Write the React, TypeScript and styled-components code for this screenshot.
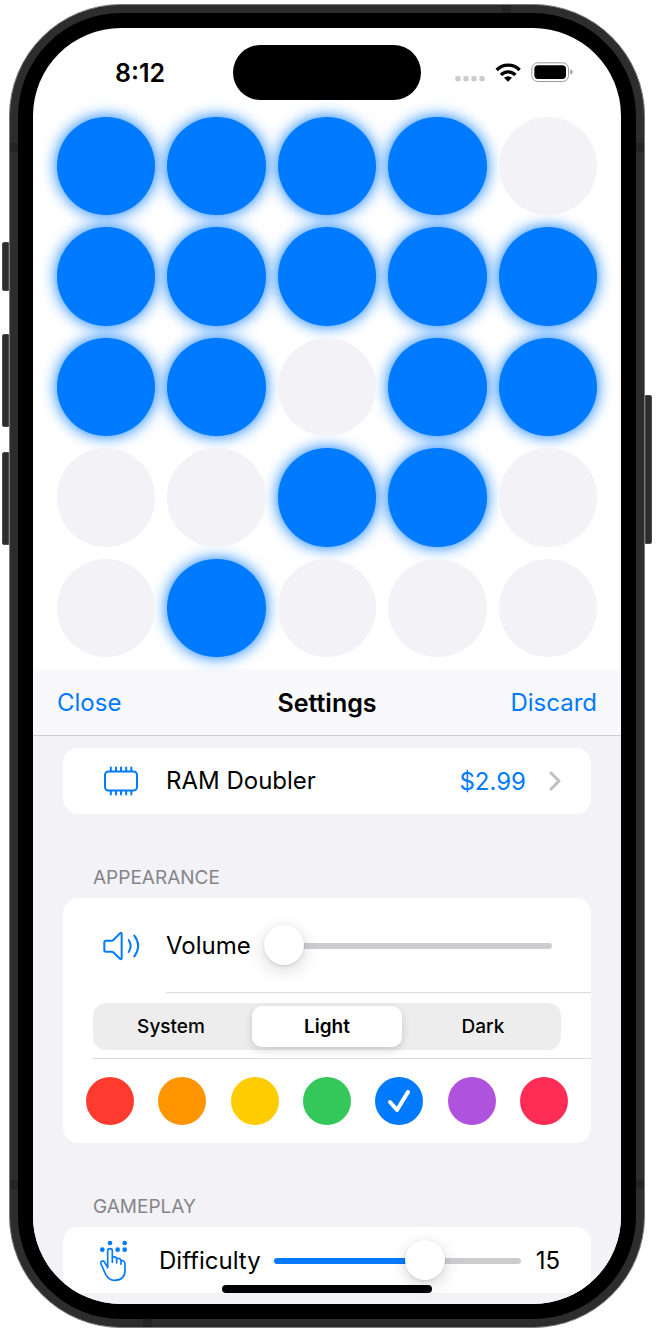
import React, { useState } from "react";
import styled, { createGlobalStyle } from "styled-components";

const colors = {
  blue: "#007aff",
  fill: "#f2f2f7",
  bar: "#f9f9fc",
  line: "#dcdcdf",
  track: "#cdcdcf",
  secondary: "#858589",
};

const GlobalStyle = createGlobalStyle`
  *, *::before, *::after { box-sizing: border-box; }
  body {
    margin: 0;
    background: #fff;
    color: #000;
    font-family: Inter, "Liberation Sans", sans-serif;
    font-size: 24px;
    line-height: 32px;
  }
  button, input { font: inherit; margin: 0; }
`;

const Page = styled.div`
  display: grid;
  grid-template-columns: 7px minmax(0, 1fr) 7px;
  padding: 4px 4px 4px 2px;
`;

const KeyRail = styled.div<{ $offset: number }>`
  display: flex;
  flex-direction: column;
  padding-top: ${(p) => p.$offset}px;
`;

const HardwareKey = styled.div<{ $length: number; $gap?: number; $side: "left" | "right" }>`
  height: ${(p) => p.$length}px;
  margin-bottom: ${(p) => p.$gap ?? 0}px;
  background: #2d2d2d;
  border: 1px solid #4a4a4a;
  border-radius: ${(p) => (p.$side === "left" ? "2px 0 0 2px" : "0 2px 2px 0")};
`;

const Frame = styled.div`
  position: relative;
  padding: 8px;
  background: #2d2d2d;
  border: 1px solid #7c7c7c;
  border-radius: 112px;
`;

const Antenna = styled.span<{ $edge: "top" | "bottom" | "left" | "right"; $at: "start" | "end" }>`
  position: absolute;
  background: #242424;
  ${(p) =>
    p.$edge === "left" || p.$edge === "right"
      ? `${p.$edge}: 0; width: 8px; height: 9px; ${p.$at === "start" ? "top" : "bottom"}: 138px;`
      : `${p.$edge}: 0; width: 9px; height: 8px; ${p.$at === "start" ? "left" : "right"}: 133px;`}
`;

const Bezel = styled.div`
  padding: 15px;
  background: #000;
  border-radius: 103px;
`;

const Screen = styled.main`
  position: relative;
  display: flex;
  flex-direction: column;
  overflow: hidden;
  background: #fff;
  border-radius: 88px;
`;

const StatusBar = styled.header`
  display: grid;
  grid-template-columns: 1fr 188px 1fr;
  align-items: center;
  padding: 17px 0;
`;

const Clock = styled.time`
  padding-left: 14px;
  text-align: center;
  font-size: 25px;
  font-weight: 600;
`;

const Island = styled.div`
  height: 55px;
  border-radius: 28px;
  background: #000;
`;

const StatusIcons = styled.div`
  display: flex;
  justify-content: center;
  align-items: flex-end;
  gap: 10px;
  padding: 0 15px 2px 0;
`;

const Board = styled.section`
  display: grid;
  grid-template-columns: repeat(5, 1fr);
  gap: 12px;
  padding: 0 24px 12px;
`;

const Light = styled.button<{ $on: boolean }>`
  aspect-ratio: 1;
  z-index: ${(p) => (p.$on ? 0 : 1)};
  padding: 0;
  border: 0;
  border-radius: 50%;
  background: ${(p) => (p.$on ? colors.blue : colors.fill)};
  box-shadow: ${(p) => (p.$on ? `0 0 16px ${colors.blue}` : "none")};
`;

const NavBar = styled.nav`
  display: grid;
  grid-template-columns: 1fr auto 1fr;
  align-items: center;
  height: 67px;
  padding: 2px 24px 0;
  background: ${colors.bar};
  border-bottom: 1px solid #cfcfd4;
`;

const Title = styled.h1`
  margin: 0;
  font-size: 25px;
  line-height: 32px;
  font-weight: 600;
`;

const NavButton = styled.button<{ $end?: boolean }>`
  justify-self: ${(p) => (p.$end ? "end" : "start")};
  padding: 0;
  border: 0;
  background: none;
  color: ${colors.blue};
`;

const List = styled.div`
  padding: 12px 30px 11px;
  background: ${colors.fill};
`;

const SectionTitle = styled.h2`
  margin: 0;
  padding: 50px 30px 6px;
  color: ${colors.secondary};
  font-size: 19px;
  line-height: 28px;
  font-weight: 400;
`;

const Card = styled.section`
  background: #fff;
  border-radius: 15px;
`;

const Row = styled.div<{ $height: number; $end: number }>`
  display: flex;
  align-items: center;
  height: ${(p) => p.$height}px;
  padding: 2px ${(p) => p.$end}px 0 0;
`;

const ProductRow = styled.button`
  display: flex;
  align-items: center;
  width: 100%;
  height: 66px;
  padding: 0 30px 0 0;
  border: 0;
  background: none;
  color: inherit;
  text-align: left;
`;

const IconSlot = styled.span<{ $start: number; $width: number }>`
  display: flex;
  flex: none;
  width: ${(p) => p.$width}px;
  padding-left: ${(p) => p.$start}px;
`;

const ProductName = styled.span`
  flex: 1;
`;

const Price = styled.span`
  margin-right: 23px;
  padding-top: 2px;
  color: ${colors.blue};
`;

const Divider = styled.hr<{ $inset: number }>`
  height: 1px;
  margin: 0 0 0 ${(p) => p.$inset}px;
  border: 0;
  background: ${colors.line};
`;

const Slider = styled.input<{ $ratio: number }>`
  appearance: none;
  flex: 1;
  min-width: 0;
  height: 42px;
  margin-left: 13px;
  background: none;

  &::-webkit-slider-runnable-track {
    height: 6px;
    border-radius: 3px;
    background: linear-gradient(
      to right,
      ${colors.blue} ${(p) => p.$ratio * 100}%,
      ${colors.track} ${(p) => p.$ratio * 100}%
    );
  }
  &::-webkit-slider-thumb {
    appearance: none;
    width: 40px;
    height: 40px;
    margin-top: -18px;
    border-radius: 50%;
    background: #fff;
    box-shadow: 0 1px 3px rgba(0, 0, 0, 0.12), 0 5px 18px rgba(0, 0, 0, 0.16);
  }
`;

const Amount = styled.output`
  margin-left: 15px;
`;

const Segments = styled.fieldset`
  display: grid;
  grid-template-columns: repeat(3, 1fr);
  gap: 6px;
  height: 47px;
  min-width: 0;
  margin: 10px 30px 8px;
  padding: 3px;
  border: 0;
  border-radius: 13px;
  background: #ededee;
`;

const HiddenRadio = styled.input`
  position: absolute;
  opacity: 0;
  pointer-events: none;
`;

const Segment = styled.label<{ $active: boolean }>`
  display: flex;
  align-items: center;
  justify-content: center;
  border-radius: 10px;
  font-size: 19px;
  font-weight: ${(p) => (p.$active ? 600 : 500)};
  background: ${(p) => (p.$active ? "#fff" : "transparent")};
  box-shadow: ${(p) => (p.$active ? "0 3px 8px rgba(0, 0, 0, 0.16)" : "none")};
`;

const Swatches = styled.fieldset`
  display: flex;
  justify-content: space-between;
  min-width: 0;
  margin: 0;
  padding: 18px 23px;
  border: 0;
`;

const Swatch = styled.label<{ $color: string }>`
  display: flex;
  align-items: center;
  justify-content: center;
  width: 48px;
  height: 48px;
  border-radius: 50%;
  background: ${(p) => p.$color};
`;

const HomeIndicator = styled.div`
  position: absolute;
  left: 50%;
  bottom: 11px;
  width: 210px;
  height: 8px;
  border-radius: 4px;
  background: #000;
  transform: translateX(-50%);
`;

const SignalIcon = () => (
  <svg width="30" height="6" viewBox="0 0 90 18" fill="#cbcbcb">
    {[1, 25, 49, 73].map((x) => (
      <rect key={x} x={x} y="0" width="16" height="16" rx="5" />
    ))}
  </svg>
);

const WifiIcon = () => (
  <svg width="26" height="20" viewBox="506 184 78 60" fill="none" stroke="#000" strokeWidth="10">
    <path d="M511 208 A48 48 0 0 1 580 208" />
    <path d="M524 223 A29 29 0 0 1 567 223" />
    <path d="M533 231 Q545 222 557 231 L545 243 Z" fill="#000" stroke="none" />
  </svg>
);

const BatteryIcon = () => (
  <svg width="42" height="20" viewBox="615 185 126 60">
    <rect x="617.500" y="187.500" width="110" height="56" rx="18" fill="none" stroke="#999" strokeWidth="3" />
    <rect x="625" y="195" width="95" height="41" rx="11" />
    <path d="M733 207 Q740 210 740 215 Q740 220 733 223 Z" fill="#999" />
  </svg>
);

const MemoryIcon = () => (
  <svg width="36" height="30" viewBox="0 0 36 30" fill="none" stroke={colors.blue} strokeWidth="2">
    <rect x="2" y="5.500" width="32" height="19" rx="3.500" />
    {[7.8, 13, 18, 23.2, 28.3].map((x) => (
      <path key={x} d={`M${x} 1.500v3.500M${x} 25v3.500`} strokeLinecap="round" />
    ))}
  </svg>
);

const SpeakerIcon = () => (
  <svg
    width="38"
    height="30"
    viewBox="126 122 114 90"
    fill="none"
    stroke={colors.blue}
    strokeWidth="6"
    strokeLinecap="round"
    strokeLinejoin="round"
  >
    <path d="M138 151 H155 Q158 151 160 149 L180 129 Q185 125 185 131 V203 Q185 209 180 205 L160 186 Q158 184 155 184 H138 Q133 184 133 179 V156 Q133 151 138 151 Z" />
    <path d="M206 149 Q218 167 206 185" />
    <path d="M223 136 Q246 167 223 198" />
  </svg>
);

const TapIcon = () => (
  <svg width="32" height="45" viewBox="294 296 96 135" fill="none">
    <g fill={colors.blue}>
      <circle cx="307" cy="328" r="7" />
      <circle cx="330" cy="308" r="7" />
      <circle cx="374" cy="308" r="7" />
      <circle cx="353" cy="328" r="7" />
      <circle cx="374" cy="328" r="7" />
    </g>
    <path
      d="M323 382 V332 Q323 325 330 325 Q337 325 337 332 V366 M337 351 Q350 346 350 358 V368 M350 355 Q363 351 363 363 V372 M363 361 Q375 359 375 372 V390 Q375 420 344 420 Q327 420 317 402 L303 371 Q301 363 307 362 Q311 361 314 366 L323 382"
      stroke={colors.blue}
      strokeWidth="5"
      strokeLinecap="round"
      strokeLinejoin="round"
    />
  </svg>
);

const ChevronIcon = () => (
  <svg width="12" height="20" viewBox="0 0 12 20" fill="none" stroke="#bfbfc1" strokeWidth="3">
    <path d="M2 2l8 8-8 8" strokeLinecap="round" strokeLinejoin="round" />
  </svg>
);

const CheckIcon = () => (
  <svg width="24" height="24" viewBox="0 0 24 24" fill="none" stroke="#fff" strokeWidth="4">
    <path d="M3 13l7 8L21 3" strokeLinecap="round" strokeLinejoin="round" />
  </svg>
);

const initialBoard = ["11110", "11111", "11011", "00110", "01000"]
  .join("")
  .split("")
  .map((c) => c === "1");

const themes = ["System", "Light", "Dark"];

const accents = [
  { name: "Red", value: "#ff3b30" },
  { name: "Orange", value: "#ff9500" },
  { name: "Yellow", value: "#ffcc02" },
  { name: "Green", value: "#34c759" },
  { name: "Blue", value: "#007aff" },
  { name: "Purple", value: "#af52de" },
  { name: "Pink", value: "#ff2d55" },
];

const MIN_LEVEL = 1;
const MAX_LEVEL = 23;

export default function App() {
  const [board, setBoard] = useState(initialBoard);
  const [volume, setVolume] = useState(0);
  const [theme, setTheme] = useState("Light");
  const [accent, setAccent] = useState("Blue");
  const [level, setLevel] = useState(15);

  const toggle = (index: number) => setBoard(board.map((on, i) => (i === index ? !on : on)));

  return (
    <>
      <GlobalStyle />
      <Page>
        <KeyRail $offset={238}>
          <HardwareKey $side="left" $length={49} $gap={43} />
          <HardwareKey $side="left" $length={93} $gap={25} />
          <HardwareKey $side="left" $length={93} />
        </KeyRail>
        <Frame>
          <Antenna $edge="left" $at="start" />
          <Antenna $edge="left" $at="end" />
          <Antenna $edge="right" $at="start" />
          <Antenna $edge="right" $at="end" />
          <Antenna $edge="top" $at="end" />
          <Antenna $edge="bottom" $at="start" />
          <Bezel>
            <Screen>
              <StatusBar>
                <Clock>8:12</Clock>
                <Island />
                <StatusIcons>
                  <SignalIcon />
                  <WifiIcon />
                  <BatteryIcon />
                </StatusIcons>
              </StatusBar>

              <Board aria-label="Game board">
                {board.map((on, i) => (
                  <Light key={i} $on={on} aria-pressed={on} aria-label={`Light ${i + 1}`} onClick={() => toggle(i)} />
                ))}
              </Board>

              <NavBar>
                <NavButton>Close</NavButton>
                <Title>Settings</Title>
                <NavButton $end>Discard</NavButton>
              </NavBar>

              <List>
                <Card>
                  <ProductRow>
                    <IconSlot $start={40} $width={103}>
                      <MemoryIcon />
                    </IconSlot>
                    <ProductName>RAM Doubler</ProductName>
                    <Price>$2.99</Price>
                    <ChevronIcon />
                  </ProductRow>
                </Card>

                <SectionTitle>APPEARANCE</SectionTitle>
                <Card>
                  <Row $height={94} $end={39}>
                    <IconSlot $start={39} $width={103}>
                      <SpeakerIcon />
                    </IconSlot>
                    <label htmlFor="volume">Volume</label>
                    <Slider
                      id="volume"
                      type="range"
                      min={0}
                      max={100}
                      value={volume}
                      $ratio={volume / 100}
                      onChange={(e) => setVolume(Number(e.target.value))}
                    />
                  </Row>
                  <Divider $inset={103} />
                  <Segments aria-label="Theme">
                    {themes.map((name) => (
                      <Segment key={name} $active={theme === name}>
                        <HiddenRadio type="radio" name="theme" checked={theme === name} onChange={() => setTheme(name)} />
                        {name}
                      </Segment>
                    ))}
                  </Segments>
                  <Divider $inset={30} />
                  <Swatches aria-label="Accent colour">
                    {accents.map(({ name, value }) => (
                      <Swatch key={name} $color={value}>
                        <HiddenRadio
                          type="radio"
                          name="accent"
                          aria-label={name}
                          checked={accent === name}
                          onChange={() => setAccent(name)}
                        />
                        {accent === name && <CheckIcon />}
                      </Swatch>
                    ))}
                  </Swatches>
                </Card>

                <SectionTitle>GAMEPLAY</SectionTitle>
                <Card>
                  <Row $height={66} $end={31}>
                    <IconSlot $start={35} $width={96}>
                      <TapIcon />
                    </IconSlot>
                    <label htmlFor="difficulty">Difficulty</label>
                    <Slider
                      id="difficulty"
                      type="range"
                      min={MIN_LEVEL}
                      max={MAX_LEVEL}
                      value={level}
                      $ratio={(level - MIN_LEVEL) / (MAX_LEVEL - MIN_LEVEL)}
                      onChange={(e) => setLevel(Number(e.target.value))}
                    />
                    <Amount htmlFor="difficulty">{level}</Amount>
                  </Row>
                </Card>
              </List>
              <HomeIndicator />
            </Screen>
          </Bezel>
        </Frame>
        <KeyRail $offset={391}>
          <HardwareKey $side="right" $length={149} />
        </KeyRail>
      </Page>
    </>
  );
}
